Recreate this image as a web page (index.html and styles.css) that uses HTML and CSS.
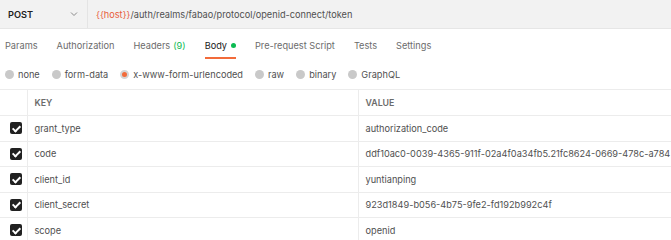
FILE: index.html
```html
<!DOCTYPE html>
<html lang="en">
  <head>
    <meta charset="UTF-8" />
    <title>Request</title>
    <link rel="stylesheet" href="styles.css">
  </head>
  <body>
    <div id="url-bar">
      <div id="method">
        <span>POST</span>
        <svg width="10" height="10" viewBox="0 0 10 10" fill="none">
          <path d="M2 3.5L5 6.5L8 3.5" stroke="#8a8a8a" stroke-width="1" />
        </svg>
      </div>
      <div id="url"><span class="var">{{host}}</span>/auth/realms/fabao/protocol/openid-connect/token</div>
    </div>

    <div id="tabs">
      <div class="tab">Params</div>
      <div class="tab">Authorization</div>
      <div class="tab">Headers <span class="count">(9)</span></div>
      <div class="tab active">Body <span class="dot"></span></div>
      <div class="tab">Pre-request Script</div>
      <div class="tab">Tests</div>
      <div class="tab">Settings</div>
    </div>

    <div id="body-types">
      <label class="radio"><span class="circle"></span>none</label>
      <label class="radio"><span class="circle"></span>form-data</label>
      <label class="radio"><span class="circle selected"></span>x-www-form-urlencoded</label>
      <label class="radio"><span class="circle"></span>raw</label>
      <label class="radio"><span class="circle"></span>binary</label>
      <label class="radio"><span class="circle"></span>GraphQL</label>
    </div>

    <table id="params">
      <tr class="head">
        <td class="check"></td>
        <td class="key">KEY</td>
        <td class="value">VALUE</td>
      </tr>
      <tr>
        <td class="check"><span class="box"></span></td>
        <td class="key">grant_type</td>
        <td class="value">authorization_code</td>
      </tr>
      <tr>
        <td class="check"><span class="box"></span></td>
        <td class="key">code</td>
        <td class="value">ddf10ac0-0039-4365-911f-02a4f0a34fb5.21fc8624-0669-478c-a784</td>
      </tr>
      <tr>
        <td class="check"><span class="box"></span></td>
        <td class="key">client_id</td>
        <td class="value">yuntianping</td>
      </tr>
      <tr>
        <td class="check"><span class="box"></span></td>
        <td class="key">client_secret</td>
        <td class="value">923d1849-b056-4b75-9fe2-fd192b992c4f</td>
      </tr>
      <tr>
        <td class="check"><span class="box"></span></td>
        <td class="key">scope</td>
        <td class="value">openid</td>
      </tr>
    </table>
  </body>
</html>
```

FILE: styles.css
```css
* {
  box-sizing: border-box;
  margin: 0;
  padding: 0;
}

body {
  font-family: Inter, "Open Sans", sans-serif;
  font-size: 9.2px;
  color: #505050;
  background-color: #fff;
  overflow: hidden;
}

#url-bar {
  display: flex;
  height: 29px;
  background-color: #f2f2f2;
  border-bottom: 1px solid #e6e6e6;
}

#method {
  width: 88px;
  display: flex;
  align-items: center;
  justify-content: space-between;
  padding: 0 8px 0 8px;
  border-right: 1px solid #e4e4e4;
}

#method span {
  font-weight: 600;
  color: #212121;
}

#url {
  display: flex;
  align-items: center;
  padding-left: 8px;
  white-space: nowrap;
}

.var {
  color: #e8603c;
}

#tabs {
  display: flex;
  height: 30px;
  padding-left: 5px;
}

.tab {
  display: flex;
  align-items: center;
  margin-right: 19px;
  color: #6b6b6b;
  border-bottom: 2px solid transparent;
  padding-top: 4px;
}

.tab.active {
  color: #212121;
  border-bottom-color: #f26b3a;
}

.count {
  color: #0cbb52;
  margin-left: 3px;
}

.dot {
  display: inline-block;
  width: 5px;
  height: 5px;
  border-radius: 50%;
  background-color: #0cbb52;
  margin-left: 4px;
}

#body-types {
  display: flex;
  align-items: center;
  height: 30px;
  padding-left: 5px;
}

.radio {
  display: flex;
  align-items: center;
  margin-right: 12px;
  color: #505050;
}

.circle {
  width: 9px;
  height: 9px;
  border-radius: 50%;
  background-color: #c9c9c9;
  margin-right: 4px;
}

.circle.selected {
  background-color: #f26b3a;
  border: 2px solid #d5d5d5;
}

#params {
  width: 100%;
  border-collapse: collapse;
  table-layout: fixed;
}

#params td {
  height: 25.5px;
  border-top: 1px solid #ececec;
  border-bottom: 1px solid #ececec;
  white-space: nowrap;
  overflow: hidden;
}

#params .check {
  width: 27px;
  border-right: 1px solid #ececec;
  padding-left: 10px;
}

#params .key {
  width: 331px;
  border-right: 1px solid #ececec;
  padding-left: 7px;
}

#params .value {
  padding-left: 7px;
}

#params .head td {
  height: 26px;
  color: #6b6b6b;
  font-weight: 600;
  font-size: 8.8px;
}

.box {
  display: block;
  width: 12px;
  height: 12px;
  border-radius: 2px;
  background-color: #212121;
  position: relative;
}

.box::after {
  content: "";
  position: absolute;
  left: 4px;
  top: 1.5px;
  width: 3px;
  height: 6px;
  border: solid #fff;
  border-width: 0 2px 2px 0;
  transform: rotate(45deg);
}
```
